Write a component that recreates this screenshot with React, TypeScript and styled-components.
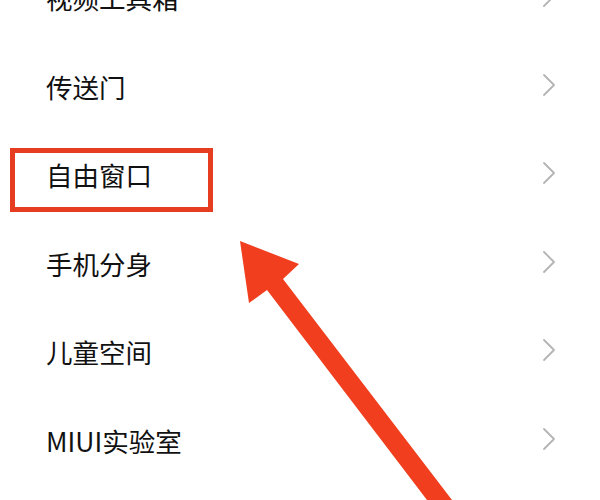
import styled, { createGlobalStyle } from 'styled-components';

const GlobalStyle = createGlobalStyle`
  html, body {
    margin: 0;
    padding: 0;
    background: #ffffff;
  }
  body {
    font-family: "Noto Sans CJK SC", "Noto Sans", sans-serif;
  }
`;

const Screen = styled.div`
  position: relative;
  width: 600px;
  height: 500px;
  overflow: hidden;
  background: #ffffff;
`;

const List = styled.ul`
  list-style: none;
  margin: -46px 0 0;
  padding: 0;
`;

const Row = styled.li`
  height: 88.5px;
  display: flex;
  align-items: center;
  justify-content: space-between;
  padding: 0 44px 0 46px;
  box-sizing: border-box;
`;

const Label = styled.span`
  font-size: 26.5px;
  color: #111111;
  letter-spacing: 0;
  line-height: 1;
`;

const Chevron = styled.svg`
  width: 14px;
  height: 24px;
  margin-top: -4px;
`;

const Highlight = styled.div`
  position: absolute;
  left: 10px;
  top: 148px;
  width: 203px;
  height: 64px;
  border: 5px solid #e63c1f;
  box-sizing: border-box;
`;

const Arrow = styled.svg`
  position: absolute;
  left: 0;
  top: 0;
  width: 600px;
  height: 500px;
  pointer-events: none;
`;

const items = ['视频工具箱', '传送门', '自由窗口', '手机分身', '儿童空间', 'MIUI实验室'];

function App() {
  return (
    <>
      <GlobalStyle />
      <Screen>
        <List>
          {items.map((name) => (
            <Row key={name}>
              <Label>{name}</Label>
              <Chevron viewBox="0 0 14 24">
                <polyline
                  points="2,2 12,12 2,22"
                  fill="none"
                  stroke="#b4b4b4"
                  strokeWidth="1.8"
                  strokeLinecap="round"
                  strokeLinejoin="round"
                />
              </Chevron>
            </Row>
          ))}
        </List>
        <Highlight />
        <Arrow viewBox="0 0 600 500">
          <polygon
            points="240,241 299,264 283,279 452,500 427,500 267,290 249,303"
            fill="#f03e1e"
          />
        </Arrow>
      </Screen>
    </>
  );
}

export default App;
